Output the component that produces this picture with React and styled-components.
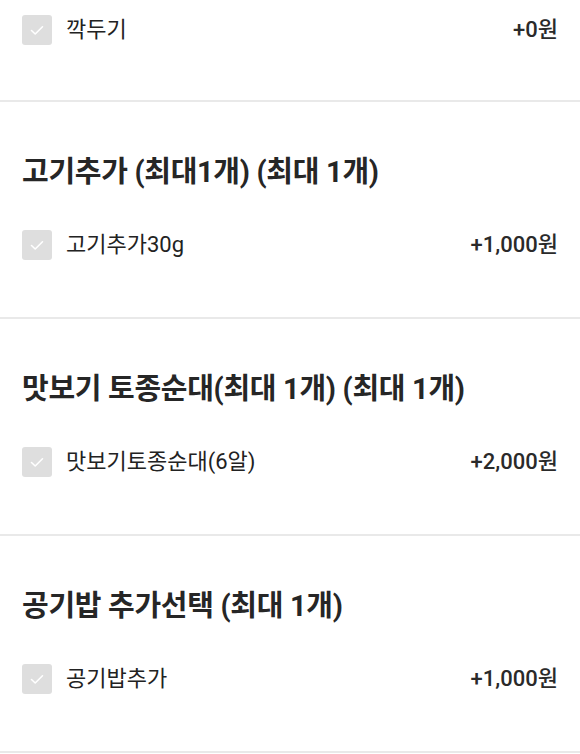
import styled, { createGlobalStyle } from "styled-components";

const GlobalStyle = createGlobalStyle`
  body {
    margin: 0;
    background: #ffffff;
    font-family: Roboto, "Noto Sans CJK KR", "Noto Sans", sans-serif;
    color: #222222;
  }
`;

const Page = styled.div`
  width: 580px;
  height: 754px;
  overflow: hidden;
  background: #ffffff;
`;

const Section = styled.section`
  padding: ${(p) => (p.$first ? "10px 22px 50px 22px" : "52px 22px 52px 22px")};
  border-bottom: 2px solid #e9e9e9;
  display: flex;
  flex-direction: column;
  gap: 35px;
`;

const Title = styled.h2`
  margin: 0;
  height: 36px;
  line-height: 36px;
  font-size: 29px;
  font-weight: 700;
  color: #262626;
  letter-spacing: -0.3px;
`;

const Row = styled.label`
  height: 40px;
  display: flex;
  align-items: center;
  gap: 14px;
`;

const Check = styled.span`
  width: 30px;
  height: 30px;
  border-radius: 3px;
  background: #dedede;
  display: flex;
  align-items: center;
  justify-content: center;
  flex: none;
`;

const Name = styled.span`
  flex: 1;
  font-size: 22px;
  line-height: 40px;
  color: #222222;
`;

const Price = styled.span`
  font-size: 22px;
  line-height: 40px;
  font-weight: 500;
  color: #2a2a2a;
`;

const CheckIcon = () => (
  <svg width="14" height="11" viewBox="0 0 14 11" fill="none">
    <path d="M1.5 5.5 L5.2 9 L12.5 1.8" stroke="#ffffff" strokeWidth="1.6" strokeLinecap="round" strokeLinejoin="round" />
  </svg>
);

const Option = ({ name, price }) => (
  <Row>
    <Check>
      <CheckIcon />
    </Check>
    <Name>{name}</Name>
    <Price>{price}</Price>
  </Row>
);

const groups = [
  { title: "고기추가 (최대1개) (최대 1개)", name: "고기추가30g", price: "+1,000원" },
  { title: "맛보기 토종순대(최대 1개) (최대 1개)", name: "맛보기토종순대(6알)", price: "+2,000원" },
  { title: "공기밥 추가선택 (최대 1개)", name: "공기밥추가", price: "+1,000원" },
];

export default function App() {
  return (
    <Page>
      <GlobalStyle />
      <Section $first>
        <Option name="깍두기" price="+0원" />
      </Section>
      {groups.map((g) => (
        <Section key={g.title}>
          <Title>{g.title}</Title>
          <Option name={g.name} price={g.price} />
        </Section>
      ))}
    </Page>
  );
}
